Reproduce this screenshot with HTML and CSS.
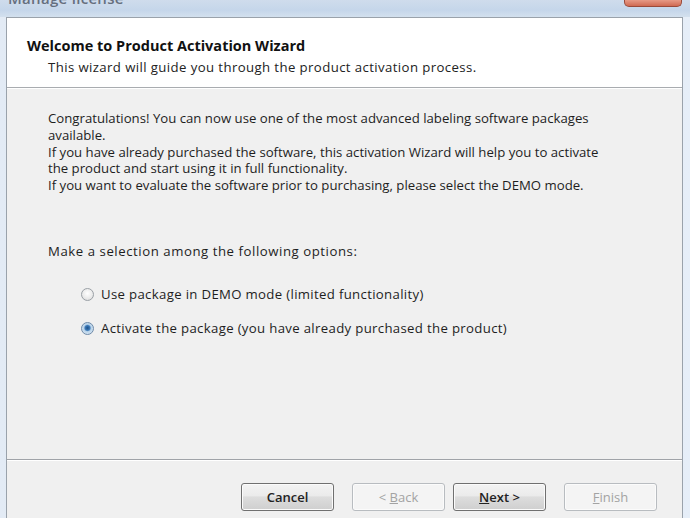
FILE: index.html
```html
<!DOCTYPE html>
<html>
<head>
<meta charset="utf-8">
<link rel="stylesheet" href="styles.css">
</head>
<body>
<div class="window">
  <div class="titlebar">
    <span class="title">Manage license</span>
    <span class="close"></span>
  </div>
  <div class="client">
    <div class="header">
      <div class="h-title">Welcome to Product Activation Wizard</div>
      <div class="h-sub">This wizard will guide you through the product activation process.</div>
    </div>
    <div class="content">
      <p class="intro">Congratulations! You can now use one of the most advanced labeling software packages<br>available.<br>If you have already purchased the software, this activation Wizard will help you to activate<br>the product and start using it in full functionality.<br>If you want to evaluate the software prior to purchasing, please select the DEMO mode.</p>
      <p class="prompt">Make a selection among the following options:</p>
      <div class="options">
        <label class="opt"><span class="radio"></span>Use package in DEMO mode (limited functionality)</label>
        <label class="opt"><span class="radio checked"></span>Activate the package (you have already purchased the product)</label>
      </div>
    </div>
    <div class="footer">
      <button class="btn">Cancel</button>
      <div class="nav">
        <button class="btn disabled">&lt; <u>B</u>ack</button>
        <button class="btn"><u>N</u>ext &gt;</button>
      </div>
      <button class="btn disabled"><u>F</u>inish</button>
    </div>
  </div>
</div>
</body>
</html>
```

FILE: styles.css
```css
html, body {
  margin: 0;
  padding: 0;
  width: 690px;
  height: 518px;
  overflow: hidden;
}
body {
  font-family: "Open Sans", "Noto Sans", sans-serif;
  color: #1e1e1e;
  background: #dde7f3;
}
.window {
  display: flex;
  flex-direction: column;
  height: 518px;
  background: linear-gradient(to right, #e3ebf5 0%, #d5e2f1 40%, #dbe7f4 70%, #e6eef8 100%);
}
.titlebar {
  height: 17px;
  display: flex;
  justify-content: space-between;
  align-items: flex-start;
  overflow: hidden;
  background: linear-gradient(to bottom, #cfdcec 0%, #c5d6ea 60%, #d3e0ee 100%);
}
.title {
  font-size: 15px;
  line-height: 18px;
  font-weight: 600;
  color: #3a4250;
  margin-top: -11px;
  margin-left: 8px;
  opacity: 0.7;
  letter-spacing: 0.3px;
}
.close {
  width: 56px;
  height: 6px;
  margin-right: 8px;
  border-radius: 0 0 5px 5px;
  background: linear-gradient(to bottom, #e79a86, #d06a52);
  border: 1px solid #9a4a3a;
  border-top: none;
}
.client {
  flex: 1;
  margin: 0 7px 0 6px;
  border: 1px solid #9aa2ab;
  border-bottom: none;
  background: #f0f0f0;
  display: flex;
  flex-direction: column;
}
.header {
  height: 70px;
  background: #ffffff;
  border-bottom: 1px solid #a9acb0;
  box-sizing: border-box;
  padding: 18px 0 0 20px;
}
.h-title {
  font-size: 14.5px;
  font-weight: 700;
  color: #111;
  line-height: 19px;
}
.h-sub {
  font-size: 13.2px;
  line-height: 18px;
  margin: 3px 0 0 21px;
  color: #222;
  letter-spacing: 0.4px;
}
.content {
  flex: 1;
  border-top: 1px solid #ffffff;
  border-bottom: 1px solid #a0a3a8;
  padding: 21px 0 0 41px;
  font-size: 13.2px;
}
.intro {
  margin: 0;
  line-height: 16.8px;
}
.prompt {
  margin: 49px 0 0 0;
  line-height: 17px;
  letter-spacing: 0.55px;
}
.options {
  display: flex;
  flex-direction: column;
  gap: 17px;
  margin: 26px 0 0 33px;
  letter-spacing: 0.33px;
}
.opt {
  display: flex;
  align-items: center;
  line-height: 17px;
}
.radio {
  width: 11px;
  height: 11px;
  border-radius: 50%;
  border: 1px solid #9aa0a6;
  background: radial-gradient(circle at 50% 40%, #ffffff 0%, #e9e9e9 60%, #d4d4d4 100%);
  margin-right: 7px;
  box-sizing: content-box;
  flex: none;
}
.radio.checked {
  border-color: #6e8aa8;
  background: radial-gradient(circle at 50% 45%, #1c4f86 0%, #3d7ab8 30%, #b8d3ea 45%, #e8eef5 100%);
}
.footer {
  height: 58px;
  border-top: 1px solid #ffffff;
  display: flex;
  justify-content: flex-end;
  align-items: flex-start;
  padding: 22px 25px 0 0;
  box-sizing: border-box;
  gap: 18px;
}
.nav {
  display: flex;
  gap: 8px;
}
.btn {
  width: 93px;
  height: 28px;
  font-family: inherit;
  font-size: 13px;
  font-weight: 600;
  color: #222;
  border: 1px solid #707070;
  border-radius: 3px;
  background: linear-gradient(to bottom, #f3f3f3 0%, #ebebeb 45%, #dddddd 50%, #cfcfcf 100%);
  box-shadow: inset 0 0 0 1px #fbfbfb;
  padding: 0;
}
.btn.disabled {
  color: #a3a3a3;
  border-color: #b8bcc0;
  background: #f4f4f4;
  font-weight: 400;
}
```
